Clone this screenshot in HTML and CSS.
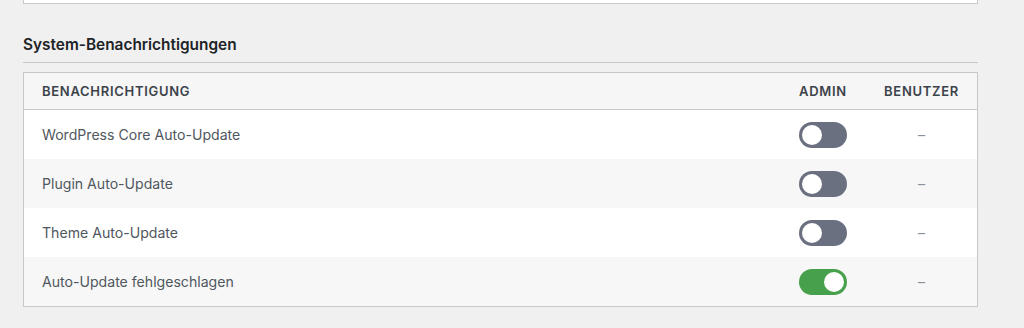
FILE: index.html
```html
<!DOCTYPE html>
<html lang="de">
<head>
<meta charset="utf-8">
<title>System-Benachrichtigungen</title>
<link rel="stylesheet" href="styles.css">
</head>
<body>
<div class="page">
  <div class="prev-card"></div>
  <h2 class="section-title">System-Benachrichtigungen</h2>
  <div class="table">
    <div class="row head">
      <div class="cell name">Benachrichtigung</div>
      <div class="cell center">Admin</div>
      <div class="cell center">Benutzer</div>
    </div>
    <div class="row">
      <div class="cell name">WordPress Core Auto-Update</div>
      <div class="cell center"><span class="toggle"><span class="knob"></span></span></div>
      <div class="cell center dash">–</div>
    </div>
    <div class="row alt">
      <div class="cell name">Plugin Auto-Update</div>
      <div class="cell center"><span class="toggle"><span class="knob"></span></span></div>
      <div class="cell center dash">–</div>
    </div>
    <div class="row">
      <div class="cell name">Theme Auto-Update</div>
      <div class="cell center"><span class="toggle"><span class="knob"></span></span></div>
      <div class="cell center dash">–</div>
    </div>
    <div class="row alt">
      <div class="cell name">Auto-Update fehlgeschlagen</div>
      <div class="cell center"><span class="toggle on"><span class="knob"></span></span></div>
      <div class="cell center dash">–</div>
    </div>
  </div>
</div>
</body>
</html>
```
FILE: styles.css
```css
html, body {
  margin: 0;
  padding: 0;
  background: #f0f0f0;
}
body {
  font-family: Inter, "Noto Sans", "Liberation Sans", sans-serif;
  color: #50575e;
}
.page {
  width: 955px;
  margin-left: 23px;
}
.prev-card {
  height: 3px;
  background: #fff;
  border: 1px solid #c8c8cb;
  border-top: 0;
}
.section-title {
  margin: 31px 0 0;
  padding-bottom: 7px;
  font-size: 15.4px;
  line-height: 20px;
  font-weight: 600;
  color: #1d2327;
  border-bottom: 1px solid #c8c8cb;
}
.table {
  margin-top: 9px;
  border: 1px solid #c8c8cb;
  background: #fff;
  box-shadow: 0 1px 1px rgba(0,0,0,.04);
}
.row {
  display: grid;
  grid-template-columns: 1fr 86px 111px;
  align-items: center;
  height: 49px;
  font-size: 14.1px;
}
.row.alt {
  background: #f7f7f7;
}
.row.head {
  height: 36px;
  background: #f6f6f6;
  border-bottom: 1px solid #c8c8cb;
  font-size: 13px;
  font-weight: 600;
  text-transform: uppercase;
  letter-spacing: 0.7px;
  color: #3c434a;
}
.cell.name {
  padding-left: 18px;
}
.cell.center {
  display: flex;
  justify-content: center;
}
.dash {
  color: #8c8f94;
}
.toggle {
  display: flex;
  align-items: center;
  width: 48px;
  height: 26px;
  padding: 0 3px;
  box-sizing: border-box;
  border-radius: 13px;
  background: #6b7080;
}
.toggle.on {
  background: #47a04b;
  justify-content: flex-end;
}
.knob {
  width: 20px;
  height: 20px;
  border-radius: 50%;
  background: #fff;
}
```
